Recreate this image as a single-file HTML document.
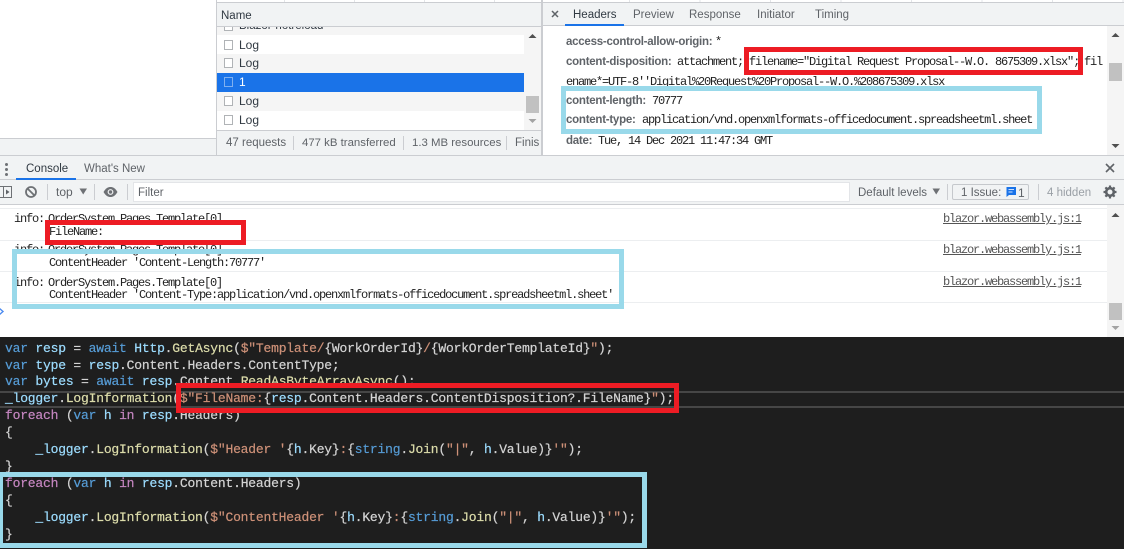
<!DOCTYPE html>
<html><head><meta charset="utf-8"><style>
html,body{margin:0;padding:0;background:#fff}
#p{position:relative;width:1124px;height:549px;overflow:hidden;background:#fff;font-family:"Liberation Sans",sans-serif;font-size:12px;color:#333}
#p div,#p span.t,#p svg{position:absolute}
.t{white-space:pre;line-height:14px;height:14px}
.m{font-family:"Liberation Mono",monospace;font-size:12px;letter-spacing:-1.2px;color:#222}
.b{font-weight:bold;color:#5f6368;font-size:11.5px;letter-spacing:-.25px}
.g{color:#5f6368}
.l{color:#555;text-decoration:underline}
.c{font-family:"Liberation Mono",monospace;font-size:13px;letter-spacing:-.2px;-webkit-text-stroke:.2px;color:#d4d4d4;line-height:17px;height:17px;white-space:pre;left:5px;position:absolute}
.c i{font-style:normal}
.k{color:#569cd6}.v{color:#9cdcfe}.f{color:#dcdcaa}.s{color:#ce9178}.w{color:#c586c0}
.ic{width:6.5px;height:8px;border:1.5px solid #b0b3b6;background:#fff}
</style></head><body><div id="p">

<!-- timeline ticks -->
<div style="left:217px;top:0;width:325px;height:2px;background:repeating-linear-gradient(90deg,transparent 0 67px,#e3e5e8 67px 68px,transparent 68px 70px)"></div>
<div style="left:560px;top:0;width:564px;height:2px;background:repeating-linear-gradient(90deg,transparent 0 69px,#e3e5e8 69px 70px,transparent 70px 70.5px)"></div>

<!-- left gray -->
<div style="left:0;top:138px;width:216px;height:1px;background:#cbcdd1"></div>
<div style="left:0;top:139px;width:216px;height:16px;background:#f1f3f4"></div>

<!-- network panel -->
<div style="left:216px;top:2px;width:326px;height:153px;background:#fff"></div>
<div style="left:216px;top:2px;width:326px;height:25px;background:#f1f3f4;border-top:1px solid #cbcdd1;border-bottom:1px solid #cbcdd1;box-sizing:border-box"></div>
<div style="left:216px;top:0;width:1px;height:155px;background:#cbcdd1"></div>
<div style="left:541px;top:0;width:2px;height:155px;background:#cbcdd1"></div>
<span class="t" style="left:221px;top:9px;font-size:11.5px;color:#303942">Name</span>
<div style="left:217px;top:27px;width:307px;height:8px;background:#f5f5f5;overflow:hidden">
  <span class="t" style="left:22px;top:-8px;color:#303942;font-size:11.5px">Blazor-hotreload</span>
  <div class="ic" style="left:7px;top:-6px"></div>
</div>
<div style="left:217px;top:35px;width:307px;height:19px;background:#fff"></div>
<div style="left:217px;top:54px;width:307px;height:19px;background:#f5f5f5"></div>
<div style="left:217px;top:73px;width:307px;height:19px;background:#1a73e8"></div>
<div style="left:217px;top:92px;width:307px;height:19px;background:#f5f5f5"></div>
<div style="left:217px;top:111px;width:307px;height:19px;background:#fff"></div>
<div class="ic" style="left:224px;top:40px"></div><span class="t" style="left:239px;top:38px;color:#303942">Log</span>
<div class="ic" style="left:224px;top:58px"></div><span class="t" style="left:239px;top:56px;color:#303942">Log</span>
<div class="ic" style="left:224px;top:77px;border-color:#7fb0f0;background:#1a73e8"></div><span class="t" style="left:239px;top:75px;color:#fff">1</span>
<div class="ic" style="left:224px;top:96px"></div><span class="t" style="left:239px;top:94px;color:#303942">Log</span>
<div class="ic" style="left:224px;top:115px"></div><span class="t" style="left:239px;top:113px;color:#303942">Log</span>
<!-- list scrollbar -->
<div style="left:524px;top:27px;width:17px;height:103px;background:#f5f5f5"></div>
<svg style="left:528px;top:33px" width="9" height="6"><path d="M0.5 5 L4.5 1 L8.5 5Z" fill="#505050"/></svg>
<div style="left:526px;top:96px;width:13px;height:17px;background:#c1c1c1"></div>
<svg style="left:528px;top:118px" width="9" height="6"><path d="M0.5 1 L4.5 5 L8.5 1Z" fill="#a3a3a3"/></svg>
<!-- list footer -->
<div style="left:217px;top:130px;width:324px;height:1px;background:#cbcdd1"></div>
<div style="left:217px;top:131px;width:324px;height:24px;background:#f1f3f4"></div>
<span class="t g" style="left:226px;top:136px;font-size:11.5px">47 requests</span>
<div style="left:293px;top:136px;width:1px;height:14px;background:#cbcdd1"></div>
<span class="t g" style="left:302px;top:136px;font-size:11.4px">477 kB transferred</span>
<div style="left:403px;top:136px;width:1px;height:14px;background:#cbcdd1"></div>
<span class="t g" style="left:412px;top:136px;font-size:11.4px">1.3 MB resources</span>
<div style="left:506px;top:136px;width:1px;height:14px;background:#cbcdd1"></div>
<span class="t g" style="left:515px;top:136px;font-size:11.5px;width:25px;overflow:hidden">Finish</span>

<!-- detail panel -->
<div style="left:543px;top:2px;width:581px;height:24px;background:#f1f3f4;border-top:1px solid #cbcdd1;border-bottom:1px solid #cbcdd1;box-sizing:border-box"></div>
<svg style="left:551px;top:10px" width="8" height="8"><path d="M1 1L7 7M7 1L1 7" stroke="#5f6368" stroke-width="1.5"/></svg>
<span class="t" style="left:573px;top:8px;color:#303942;font-size:11.5px">Headers</span>
<div style="left:565px;top:24px;width:59px;height:2px;background:#1a73e8"></div>
<span class="t g" style="left:633px;top:8px;font-size:11.5px">Preview</span>
<span class="t g" style="left:689px;top:8px;font-size:11.5px">Response</span>
<span class="t g" style="left:757px;top:8px;font-size:11.5px">Initiator</span>
<span class="t g" style="left:815px;top:8px;font-size:11.5px">Timing</span>

<span class="t b" style="left:566px;top:35px">access-control-allow-origin:</span>
<span class="t m" style="left:715px;top:35px">*</span>
<span class="t b" style="left:566px;top:55px">content-disposition:</span>
<span class="t m" style="left:677px;top:55px">attachment;</span>
<span class="t m" style="left:749px;top:55px">filename="Digital Request Proposal--W.O. 8675309.xlsx";</span>
<span class="t m" style="left:1084px;top:55px">fil</span>
<span class="t m" style="left:566px;top:75px">ename*=UTF-8''Digital%20Request%20Proposal--W.O.%208675309.xlsx</span>
<span class="t b" style="left:566px;top:94px">content-length:</span>
<span class="t m" style="left:652px;top:94px">70777</span>
<span class="t b" style="left:566px;top:113px">content-type:</span>
<span class="t m" style="left:642px;top:113px">application/vnd.openxmlformats-officedocument.spreadsheetml.sheet</span>
<span class="t b" style="left:566px;top:134px">date:</span>
<span class="t m" style="left:598px;top:134px">Tue, 14 Dec 2021 11:47:34 GMT</span>
<!-- detail scrollbar -->
<div style="left:1107px;top:26px;width:17px;height:129px;background:#f5f5f5"></div>
<svg style="left:1111px;top:32px" width="9" height="6"><path d="M0.5 5 L4.5 1 L8.5 5Z" fill="#505050"/></svg>
<div style="left:1109px;top:63px;width:13px;height:18px;background:#c1c1c1"></div>
<svg style="left:1111px;top:143px" width="9" height="6"><path d="M0.5 1 L4.5 5 L8.5 1Z" fill="#505050"/></svg>

<!-- drawer tabs -->
<div style="left:0;top:155px;width:1124px;height:1px;background:#cbcdd1"></div>
<div style="left:0;top:156px;width:1124px;height:48px;background:#f1f3f4"></div>
<div style="left:0;top:179px;width:1124px;height:1px;background:#cbcdd1"></div>
<div style="left:5px;top:163px;width:3px;height:3px;border-radius:2px;background:#6e7175"></div>
<div style="left:5px;top:168px;width:3px;height:3px;border-radius:2px;background:#6e7175"></div>
<div style="left:5px;top:173px;width:3px;height:3px;border-radius:2px;background:#6e7175"></div>
<span class="t" style="left:26px;top:162px;color:#303942;font-size:11.5px">Console</span>
<div style="left:16px;top:178px;width:60px;height:2px;background:#1a73e8"></div>
<span class="t g" style="left:84px;top:162px;font-size:11.5px">What's New</span>
<svg style="left:1105px;top:163px" width="10" height="10"><path d="M1 1L9 9M9 1L1 9" stroke="#5f6368" stroke-width="1.6"/></svg>

<!-- toolbar -->
<svg style="left:0;top:186px" width="13" height="13"><path d="M-1 .5H11.5V11.5H-1" fill="none" stroke="#6e7175"/><path d="M3.5 .5V11.5" stroke="#6e7175"/><path d="M6 3.5L9.5 6L6 8.5Z" fill="#5f6368"/></svg>
<svg style="left:24px;top:185px" width="14" height="14"><circle cx="7" cy="7" r="5" fill="none" stroke="#6e7175" stroke-width="1.8"/><path d="M3.5 3.5L10.5 10.5" stroke="#6e7175" stroke-width="1.8"/></svg>
<div style="left:47px;top:184px;width:1px;height:16px;background:#cbcdd1"></div>
<span class="t g" style="left:56px;top:185px;font-size:12px">top</span>
<svg style="left:79px;top:188px" width="9" height="7"><path d="M0.5 0.5H8L4.2 6.5Z" fill="#6e7175"/></svg>
<div style="left:94px;top:184px;width:1px;height:16px;background:#cbcdd1"></div>
<svg style="left:103px;top:186px" width="15" height="12"><path d="M0.5 6C3 2 5 1 7.5 1S12 2 14.5 6C12 10 10 11 7.5 11S3 10 .5 6Z" fill="#6e7175"/><circle cx="7.5" cy="6" r="2.9" fill="#f1f3f4"/><circle cx="7.5" cy="6" r="1.7" fill="#6e7175"/></svg>
<div style="left:127px;top:184px;width:1px;height:16px;background:#cbcdd1"></div>
<div style="left:133px;top:182px;width:717px;height:20px;background:#fff;border:1px solid #e3e5e8;box-sizing:border-box"></div>
<span class="t g" style="left:138px;top:186px;font-size:11.5px">Filter</span>
<span class="t g" style="left:858px;top:186px;font-size:11.5px">Default levels</span>
<svg style="left:932px;top:188px" width="9" height="7"><path d="M0.5 0.5H8L4.2 6.5Z" fill="#6e7175"/></svg>
<div style="left:947px;top:184px;width:1px;height:16px;background:#cbcdd1"></div>
<div style="left:952px;top:184px;width:77px;height:16px;border:1px solid #c5c8cc;border-radius:2px;box-sizing:border-box"></div>
<span class="t g" style="left:961px;top:186px;font-size:11.5px">1 Issue:</span>
<svg style="left:1005px;top:186px" width="12" height="12"><path d="M1.5 1H11V9H4L1.5 11Z" fill="#1a73e8"/><path d="M3.5 3.5H9M3.5 6H7.5" stroke="#cfe0fb" stroke-width="1"/></svg>
<span class="t g" style="left:1018px;top:186px;font-size:12px">1</span>
<div style="left:1038px;top:184px;width:1px;height:16px;background:#cbcdd1"></div>
<span class="t" style="left:1047px;top:186px;font-size:11.5px;color:#9aa0a6">4 hidden</span>
<svg style="left:1103px;top:185px" width="14" height="14" viewBox="0 0 14 14"><circle cx="7" cy="7" r="3.8" fill="none" stroke="#5f6368" stroke-width="2.6"/><path d="M7 0.5V2.5M7 11.5V13.5M0.5 7H2.5M11.5 7H13.5M2.4 2.4L3.8 3.8M10.2 10.2L11.6 11.6M2.4 11.6L3.8 10.2M10.2 3.8L11.6 2.4" stroke="#5f6368" stroke-width="2.2"/></svg>
<div style="left:0;top:204px;width:1124px;height:1px;background:#cbcdd1"></div>

<!-- console rows -->
<div style="left:0;top:208px;width:1107px;height:1px;background:#eceef0"></div>
<div style="left:0;top:240px;width:1107px;height:1px;background:#eceef0"></div>
<div style="left:0;top:271px;width:1107px;height:1px;background:#eceef0"></div>
<div style="left:0;top:302px;width:1107px;height:1px;background:#eceef0"></div>
<span class="t m" style="left:14px;top:212px">info:</span>
<span class="t m" style="left:48px;top:212px">OrderSystem.Pages.Template[0]</span>
<span class="t m" style="left:49px;top:225px">FileName:</span>
<span class="t m" style="left:14px;top:243px">info:</span>
<span class="t m" style="left:48px;top:243px">OrderSystem.Pages.Template[0]</span>
<span class="t m" style="left:49px;top:256px">ContentHeader 'Content-Length:70777'</span>
<span class="t m" style="left:14px;top:276px">info:</span>
<span class="t m" style="left:48px;top:276px">OrderSystem.Pages.Template[0]</span>
<span class="t m" style="left:49px;top:288px">ContentHeader 'Content-Type:application/vnd.openxmlformats-officedocument.spreadsheetml.sheet'</span>
<span class="t m l" style="left:943px;top:212px">blazor.webassembly.js:1</span>
<span class="t m l" style="left:943px;top:243px">blazor.webassembly.js:1</span>
<span class="t m l" style="left:943px;top:275px">blazor.webassembly.js:1</span>
<svg style="left:0;top:307px" width="5" height="9"><path d="M-1 1L3 4.5L-1 8" fill="none" stroke="#4a8af0" stroke-width="1.4"/></svg>
<!-- console scrollbar -->
<div style="left:1107px;top:205px;width:17px;height:132px;background:#f5f5f5"></div>
<svg style="left:1111px;top:212px" width="9" height="6"><path d="M0.5 5 L4.5 1 L8.5 5Z" fill="#505050"/></svg>
<div style="left:1109px;top:303px;width:13px;height:17px;background:#c1c1c1"></div>
<svg style="left:1111px;top:325px" width="9" height="6"><path d="M0.5 1 L4.5 5 L8.5 1Z" fill="#a3a3a3"/></svg>

<!-- code -->
<div style="left:0;top:337px;width:1124px;height:212px;background:#1e1e1e"></div>
<div style="left:0;top:391px;width:1124px;height:2px;background:#464646"></div>
<div style="left:0;top:406px;width:1124px;height:2px;background:#464646"></div>
<div class="c" style="top:340px"><i class="k">var</i> <i class="v">resp</i> = <i class="k">await</i> <i class="v">Http</i>.<i class="f">GetAsync</i>(<i class="s">$"Template/</i>{WorkOrderId}<i class="s">/</i>{WorkOrderTemplateId}<i class="s">"</i>);</div>
<div class="c" style="top:357px"><i class="k">var</i> <i class="v">type</i> = <i class="v">resp</i>.Content.Headers.ContentType;</div>
<div class="c" style="top:373px"><i class="k">var</i> <i class="v">bytes</i> = <i class="k">await</i> <i class="v">resp</i>.Content.<i class="f">ReadAsByteArrayAsync</i>();</div>
<div class="c" style="top:390px"><i class="v">_logger</i>.<i class="f">LogInformation</i>(<i class="s">$"FileName:</i>{<i class="v">resp</i>.Content.Headers.ContentDisposition?.FileName}<i class="s">"</i>);</div>
<div class="c" style="top:407px"><i class="w">foreach</i> (<i class="k">var</i> <i class="v">h</i> <i class="w">in</i> <i class="v">resp</i>.Headers)</div>
<div class="c" style="top:424px">{</div>
<div class="c" style="top:441px">    <i class="v">_logger</i>.<i class="f">LogInformation</i>(<i class="s">$"Header '</i>{<i class="v">h</i>.Key}<i class="s">:</i>{<i class="k">string</i>.<i class="f">Join</i>(<i class="s">"|"</i>, <i class="v">h</i>.Value)}<i class="s">'"</i>);</div>
<div class="c" style="top:458px">}</div>
<div class="c" style="top:475px"><i class="w">foreach</i> (<i class="k">var</i> <i class="v">h</i> <i class="w">in</i> <i class="v">resp</i>.Content.Headers)</div>
<div class="c" style="top:492px">{</div>
<div class="c" style="top:509px">    <i class="v">_logger</i>.<i class="f">LogInformation</i>(<i class="s">$"ContentHeader '</i>{<i class="v">h</i>.Key}<i class="s">:</i>{<i class="k">string</i>.<i class="f">Join</i>(<i class="s">"|"</i>, <i class="v">h</i>.Value)}<i class="s">'"</i>);</div>
<div class="c" style="top:526px">}</div>

<!-- annotation boxes -->
<div style="left:744px;top:47px;width:339px;height:28px;border:5px solid #ed1c24;box-sizing:border-box"></div>
<div style="left:561px;top:86px;width:481px;height:48px;border:5px solid #99d9ea;box-sizing:border-box"></div>
<div style="left:45px;top:220px;width:201px;height:25px;border:5px solid #ed1c24;box-sizing:border-box"></div>
<div style="left:12px;top:249px;width:612px;height:60px;border:5px solid #99d9ea;box-sizing:border-box"></div>
<div style="left:176px;top:383px;width:503px;height:30px;border:5px solid #ed1c24;box-sizing:border-box"></div>
<div style="left:-2px;top:472px;width:649px;height:76px;border:5px solid #99d9ea;box-sizing:border-box"></div>

</div></body></html>
